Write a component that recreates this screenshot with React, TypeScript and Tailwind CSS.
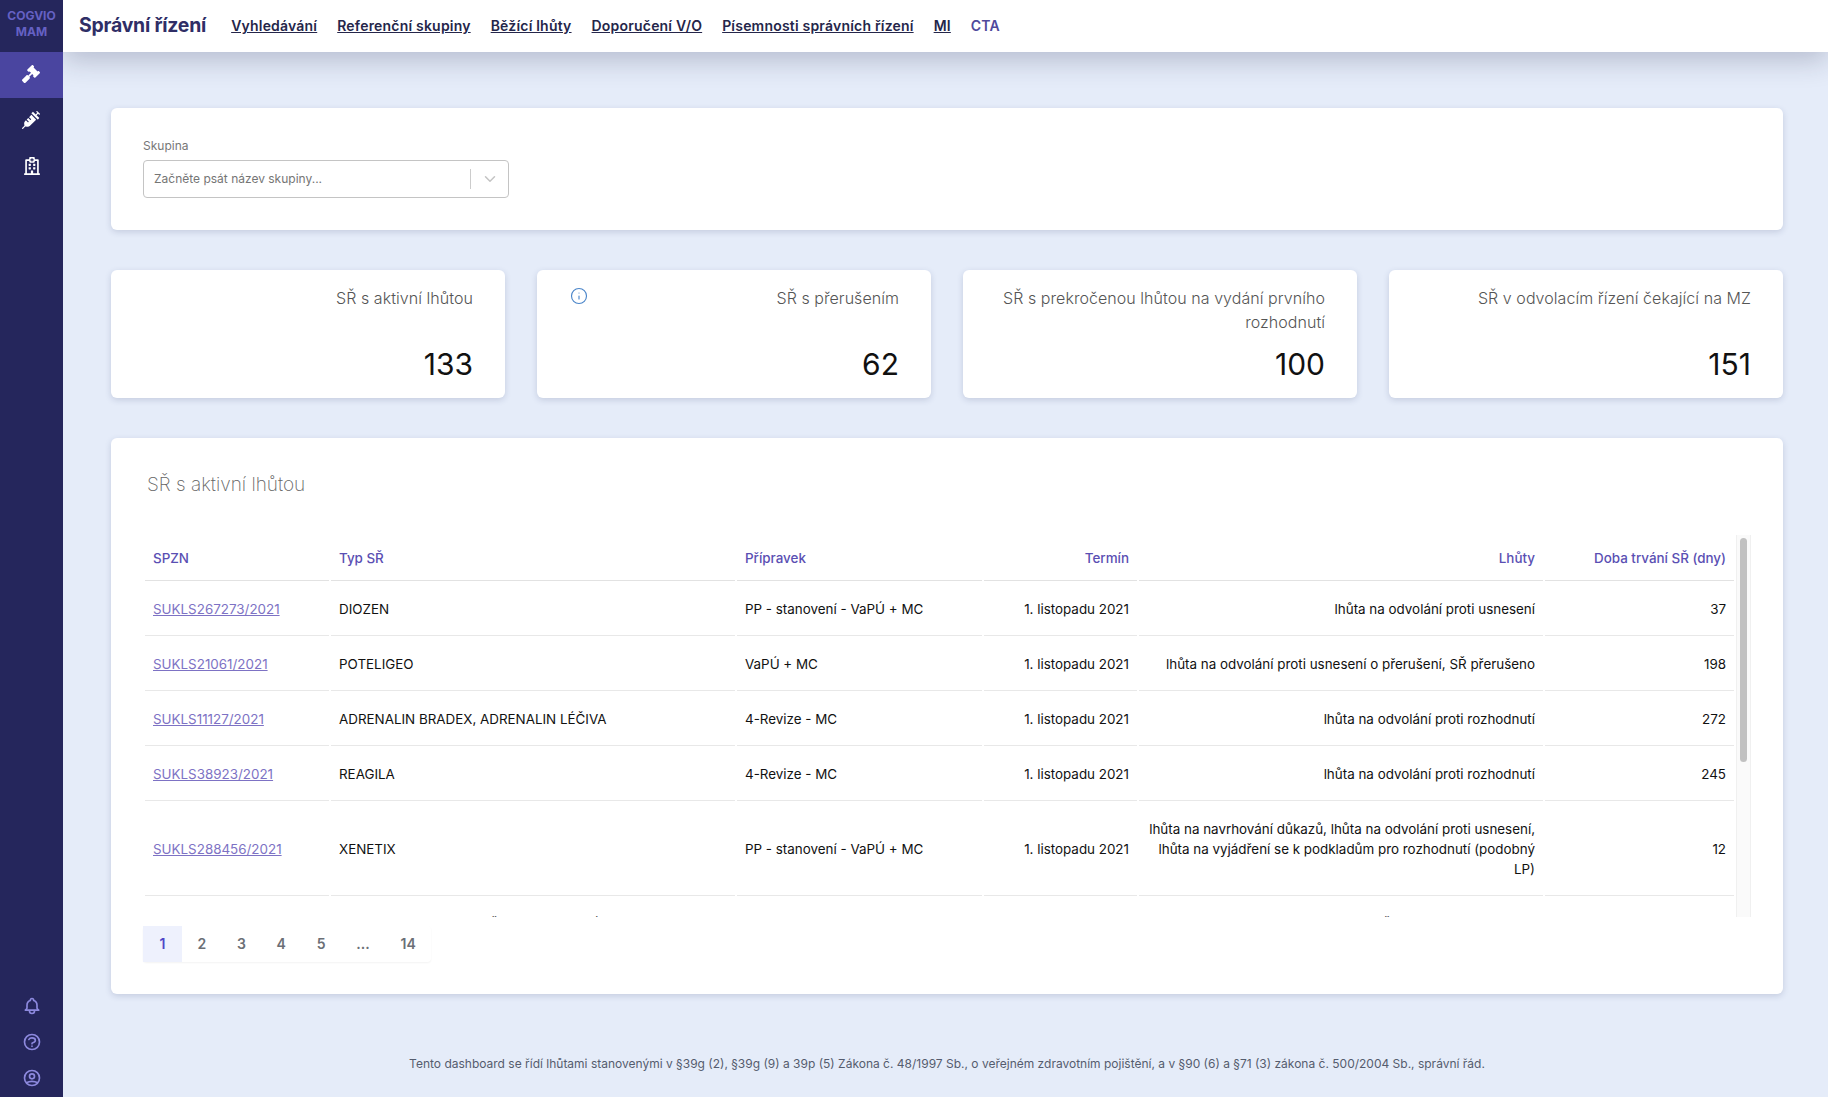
import { Info, ChevronDown } from 'lucide-react'
import { FaGavel, FaSyringe, FaRegHospital } from 'react-icons/fa'
import { HiOutlineBell, HiOutlineQuestionMarkCircle, HiOutlineUserCircle } from 'react-icons/hi'

const NAV_LINKS = ['Vyhledávání', 'Referenční skupiny', 'Běžící lhůty', 'Doporučení V/O', 'Písemnosti správních řízení', 'MI']

const STATS = [
  { label: 'SŘ s aktivní lhůtou', value: 133 },
  { label: 'SŘ s přerušením', value: 62, info: true },
  { label: 'SŘ s prekročenou lhůtou na vydání prvního rozhodnutí', value: 100 },
  { label: 'SŘ v odvolacím řízení čekající na MZ', value: 151 },
]

const ROWS = [
  { spzn: 'SUKLS267273/2021', typ: 'DIOZEN', pripravek: 'PP - stanovení - VaPÚ + MC', lhuty: 'lhůta na odvolání proti usnesení', doba: 37 },
  { spzn: 'SUKLS21061/2021', typ: 'POTELIGEO', pripravek: 'VaPÚ + MC', lhuty: 'lhůta na odvolání proti usnesení o přerušení, SŘ přerušeno', doba: 198 },
  { spzn: 'SUKLS11127/2021', typ: 'ADRENALIN BRADEX, ADRENALIN LÉČIVA', pripravek: '4-Revize - MC', lhuty: 'lhůta na odvolání proti rozhodnutí', doba: 272 },
  { spzn: 'SUKLS38923/2021', typ: 'REAGILA', pripravek: '4-Revize - MC', lhuty: 'lhůta na odvolání proti rozhodnutí', doba: 245 },
  { spzn: 'SUKLS288456/2021', typ: 'XENETIX', pripravek: 'PP - stanovení - VaPÚ + MC', lhuty: 'lhůta na navrhování důkazů, lhůta na odvolání proti usnesení, lhůta na vyjádření se k podkladům pro rozhodnutí (podobný LP)', doba: 12 },
  { spzn: 'SUKLS201554/2021', typ: 'CARVEDILOL MYLANE, ČESTER KABI, BÉTA CONCOR COR, RIVOCOR, BISOPROLOL ACCORD, SOBYCOR, BISOCARD, TENOLOL, VASOCARDIN, BISOPROLOL AUROVITAS', pripravek: '4-Revize - MC', lhuty: 'vyjádření k přerušení řízení, SŘ lhůta na odvolání proti rozhodnutí, lhůta na vyjádření se k podkladům pro rozhodnutí (podobný LP), lhůta na navrhování důkazů', doba: 96 },
]

const PAGES = ['1', '2', '3', '4', '5', '...', '14']

function Sidebar() {
  return (
    <aside className="relative z-20 flex w-[63px] shrink-0 flex-col bg-[#25265c]">
      <div className="flex h-[52px] flex-col items-center justify-center pb-1 text-xs font-bold leading-4 text-[#6561c4]">
        <span>COGVIO</span>
        <span>MAM</span>
      </div>
      <div className="flex h-[46px] items-center justify-center bg-[#4a45a0] pb-[3px] pr-px text-white">
        <FaGavel size={18} />
      </div>
      <div className="flex h-[46px] items-center justify-center pb-[3px] pr-px text-white">
        <FaSyringe size={18} />
      </div>
      <div className="flex h-[46px] items-center justify-center pb-[3px] text-white">
        <FaRegHospital size={18} />
      </div>
      <div className="mt-auto flex flex-col items-center gap-4 pb-[9px] text-[#8d89de]">
        <HiOutlineBell size={20} />
        <HiOutlineQuestionMarkCircle size={20} />
        <HiOutlineUserCircle size={20} />
      </div>
    </aside>
  )
}

function Header() {
  return (
    <header className="relative z-10 flex h-[52px] shrink-0 items-center bg-white pl-4 shadow-[0_8px_28px_rgba(30,35,70,0.24)]">
      <h1 className="mb-px mr-[25px] text-[19.4px] font-bold tracking-[-0.2px] text-[#2f2e66]">Správní řízení</h1>
      <nav className="flex items-center gap-5 text-sm font-semibold tracking-[0.2px] text-[#25264a]">
        {NAV_LINKS.map(link => (
          <a key={link} className="underline">{link}</a>
        ))}
        <a className="text-[#4f4a9c]">CTA</a>
      </nav>
    </header>
  )
}

function StatCard({ label, value, info }: { label: string; value: number; info?: boolean }) {
  return (
    <div className="relative flex h-[128px] w-[394px] flex-col rounded-md bg-white px-8 pt-4 text-right shadow-[0_2px_6px_rgba(50,60,110,0.18)]">
      {info && <Info className="absolute left-[33px] top-[17px] h-[18px] w-[18px] text-[#4a85c9]" strokeWidth={1.5} />}
      <p className="h-12 text-base font-light leading-6 tracking-[0.05px] text-[#555]">{label}</p>
      <p className="mt-[10px] text-[30px] leading-[40px] text-[#111]">{value}</p>
    </div>
  )
}

function CasesTable() {
  return (
    <div className="flex h-[382px] overflow-hidden">
      <table className="w-[1593px] shrink-0 table-fixed self-start border-separate border-spacing-x-[2px] border-spacing-y-0 text-[13.4px] leading-5">
        <thead>
          <tr className="text-[#5a4fb3]">
            <th className="h-[46px] w-[184px] border-b border-[#e2e2e2] px-2 text-left font-medium">SPZN</th>
            <th className="w-[404px] border-b border-[#e2e2e2] px-2 text-left font-medium">Typ SŘ</th>
            <th className="w-[245px] border-b border-[#e2e2e2] px-2 text-left font-medium">Přípravek</th>
            <th className="w-[153px] border-b border-[#e2e2e2] px-2 text-right font-medium">Termín</th>
            <th className="w-[404px] border-b border-[#e2e2e2] px-2 text-right font-medium">Lhůty</th>
            <th className="w-[189px] border-b border-[#e2e2e2] px-2 text-right font-medium">Doba trvání SŘ (dny)</th>
          </tr>
        </thead>
        <tbody className="text-[#111]">
          {ROWS.map(row => (
            <tr key={row.spzn}>
              <td className="border-b border-[#e8e8e8] px-2 pb-4 pt-[18px]">
                <a className="text-[#7d72c4] underline">{row.spzn}</a>
              </td>
              <td className="border-b border-[#e8e8e8] px-2 pb-4 pt-[18px]">{row.typ}</td>
              <td className="border-b border-[#e8e8e8] px-2 pb-4 pt-[18px]">{row.pripravek}</td>
              <td className="border-b border-[#e8e8e8] px-2 pb-4 pt-[18px] text-right">1. listopadu 2021</td>
              <td className="border-b border-[#e8e8e8] px-2 pb-4 pt-[18px] text-right">{row.lhuty}</td>
              <td className="border-b border-[#e8e8e8] px-2 pb-4 pt-[18px] text-right">{row.doba}</td>
            </tr>
          ))}
        </tbody>
      </table>
      <div className="h-full w-[15px] shrink-0 border-x border-[#f0f0f0] bg-[#fafafa] px-[3px] pt-[3px]">
        <div className="h-[224px] rounded-sm bg-[#c1c1c1]" />
      </div>
    </div>
  )
}

function Pagination() {
  return (
    <div className="flex w-fit rounded-sm shadow-[0_1px_2px_rgba(0,0,0,0.05)]">
      {PAGES.map((page, i) => (
        <span
          key={page}
          className={
            i === 0
              ? 'flex h-9 w-[39px] items-center justify-center bg-[#eef1fd] text-sm font-semibold text-[#4f46c8]'
              : 'flex h-9 items-center justify-center px-[15.4px] text-sm font-semibold text-[#6b6f76]'
          }
        >
          {page}
        </span>
      ))}
    </div>
  )
}

export default function App() {
  return (
    <div className="flex h-screen overflow-hidden bg-[#e5ecf9] font-['Inter',sans-serif]">
      <Sidebar />
      <div className="flex min-w-0 flex-1 flex-col">
        <Header />
        <main className="flex flex-1 flex-col pl-12 pr-[45px] pt-14">
          <section className="h-[122px] rounded-md bg-white px-8 pt-[30px] shadow-[0_2px_6px_rgba(50,60,110,0.18)]">
            <label className="block text-xs leading-4 text-[#777]">Skupina</label>
            <div className="mt-[6px] flex h-[38px] w-[366px] items-center rounded border border-[#c4c4c4] pl-[10px] text-xs text-[#757575]">
              <span className="flex-1">Začněte psát název skupiny...</span>
              <span className="h-5 w-px bg-[#ccc]" />
              <ChevronDown className="ml-[10px] mr-[9px] h-[18px] w-[18px] text-[#c4c4c4]" />
            </div>
          </section>

          <section className="mt-10 flex justify-between">
            {STATS.map(stat => (
              <StatCard key={stat.label} {...stat} />
            ))}
          </section>

          <section className="mt-10 h-[556px] rounded-md bg-white px-8 pt-[33px] shadow-[0_2px_6px_rgba(50,60,110,0.18)]">
            <h2 className="pl-1 text-[19px] font-extralight leading-7 text-[#666]">SŘ s aktivní lhůtou</h2>
            <div className="mt-9">
              <CasesTable />
            </div>
            <div className="mt-[9px]">
              <Pagination />
            </div>
          </section>

          <footer className="mt-[62px] text-center text-xs leading-4 text-[#555c6e]">
            Tento dashboard se řídí lhůtami stanovenými v §39g (2), §39g (9) a 39p (5) Zákona č. 48/1997 Sb., o veřejném zdravotním pojištění, a v §90 (6) a §71 (3) zákona č. 500/2004 Sb., správní řád.
          </footer>
        </main>
      </div>
    </div>
  )
}
